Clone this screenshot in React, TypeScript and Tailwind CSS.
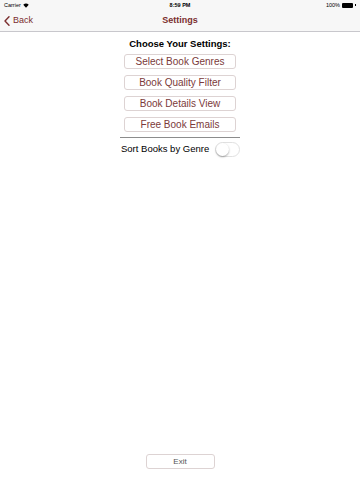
import React from "react";

export default function App() {
  const buttons = ["Select Book Genres", "Book Quality Filter", "Book Details View", "Free Book Emails"];
  return (
    <div
      className="w-[360px] h-[480px] bg-white flex flex-col overflow-hidden"
      style={{ fontFamily: '"Liberation Sans", Arial, sans-serif' }}
    >
      <div className="bg-[#f7f7f7] border-b border-[#c8c7cc]">
        <div className="h-[10px] flex items-center justify-between px-[4px] text-[5.5px] text-black relative">
          <div className="flex items-center gap-[2px]">
            <span>Carrier</span>
            <svg width="6" height="5" viewBox="0 0 12 9">
              <path d="M6 9 L0.5 3 A8 8 0 0 1 11.5 3 Z" fill="#000" />
            </svg>
          </div>
          <span className="absolute left-1/2 -translate-x-1/2 font-semibold">8:59 PM</span>
          <div className="flex items-center gap-[2px]">
            <span>100%</span>
            <div className="w-[11px] h-[5px] bg-black rounded-[1px]" />
            <div className="w-[1px] h-[2px] bg-black" />
          </div>
        </div>
        <div className="h-[21px] flex items-center relative">
          <div className="flex items-center pl-[4px] text-[#7b2e2e] text-[9px]">
            <svg width="6" height="10" viewBox="0 0 6 10" className="mr-[3px]">
              <path d="M5 0.8 L1 5 L5 9.2" stroke="#7b2e2e" strokeWidth="1.4" fill="none" strokeLinecap="round" strokeLinejoin="round" />
            </svg>
            <span>Back</span>
          </div>
          <span className="absolute left-1/2 -translate-x-1/2 text-[9px] font-semibold text-[#7b2e2e]">Settings</span>
        </div>
      </div>
      <div className="flex flex-col items-center flex-1">
        <div className="mt-[6px] text-[9.5px] font-bold text-black leading-[12px]">Choose Your Settings:</div>
        <div className="mt-[4px] flex flex-col gap-[6px]">
          {buttons.map((b) => (
            <div
              key={b}
              className="w-[112px] h-[15px] border border-[#ddd3d3] rounded-[3px] flex items-center justify-center text-[10px] text-[#7b3a3a]"
            >
              {b}
            </div>
          ))}
        </div>
        <div className="mt-[5px] w-[120px] h-px bg-[#8c8c8c]" />
        <div className="mt-[4px] w-[120px] flex items-center justify-between">
          <span className="text-[9.5px] text-black pl-[1px]">Sort Books by Genre</span>
          <div className="w-[25px] h-[15px] rounded-full border border-[#e1e1e1] bg-white relative">
            <div className="absolute left-0 top-0 w-[13px] h-[13px] rounded-full bg-white shadow-[0_1px_2px_rgba(0,0,0,0.35)]" />
          </div>
        </div>
        <div className="flex-1" />
        <div className="mb-[11px] w-[69px] h-[15px] border border-[#ddd3d3] rounded-[3px] flex items-center justify-center text-[8px] text-[#555]">
          Exit
        </div>
      </div>
    </div>
  );
}
